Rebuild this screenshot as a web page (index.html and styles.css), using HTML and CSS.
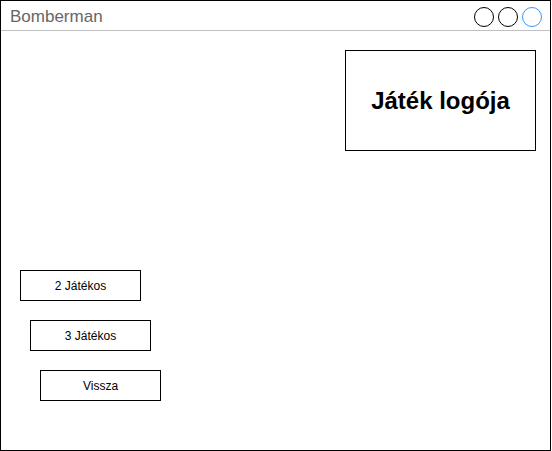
FILE: index.html
```html
<!DOCTYPE html>
<html>
<head>
<meta charset="utf-8">
<link rel="stylesheet" href="styles.css">
</head>
<body>
<div class="window">
  <div class="titlebar">
    <span class="title">Bomberman</span>
    <div class="controls">
      <span class="dot"></span>
      <span class="dot"></span>
      <span class="dot dot-blue"></span>
    </div>
  </div>
  <div class="content">
    <div class="logo">Játék logója</div>
    <div class="menu">
      <div class="btn btn-1">2 Játékos</div>
      <div class="btn btn-2">3 Játékos</div>
      <div class="btn btn-3">Vissza</div>
    </div>
  </div>
</div>
</body>
</html>
```

FILE: styles.css
```css
html, body {
  margin: 0;
  padding: 0;
  background: #fff;
}
body {
  font-family: "Liberation Sans", Arial, sans-serif;
}
.window {
  width: 551px;
  height: 451px;
  box-sizing: border-box;
  border: 1px solid #000;
  display: flex;
  flex-direction: column;
}
.titlebar {
  height: 30px;
  box-sizing: border-box;
  border-bottom: 1px solid #c0c0c0;
  display: flex;
  align-items: center;
  justify-content: space-between;
  padding-left: 9px;
  padding-right: 8px;
}
.title {
  font-size: 17px;
  color: #666;
  line-height: 1;
  margin-top: 2px;
}
.controls {
  display: flex;
  gap: 4px;
  margin-top: 2px;
}
.dot {
  width: 20px;
  height: 20px;
  box-sizing: border-box;
  border: 1px solid #000;
  border-radius: 50%;
}
.dot-blue {
  border-color: #3399ff;
}
.content {
  flex: 1;
  display: flex;
  flex-direction: column;
  padding-top: 19px;
}
.logo {
  align-self: flex-end;
  margin-right: 14px;
  width: 191px;
  height: 101px;
  box-sizing: border-box;
  border: 1px solid #000;
  display: flex;
  align-items: center;
  justify-content: center;
  font-weight: bold;
  font-size: 24px;
  color: #000;
}
.menu {
  margin-top: 119px;
  display: flex;
  flex-direction: column;
  gap: 19px;
}
.btn {
  width: 121px;
  height: 31px;
  box-sizing: border-box;
  border: 1px solid #000;
  display: flex;
  align-items: center;
  justify-content: center;
  font-size: 12px;
  color: #000;
}
.btn-1 { margin-left: 19px; }
.btn-2 { margin-left: 29px; }
.btn-3 { margin-left: 39px; }
```
